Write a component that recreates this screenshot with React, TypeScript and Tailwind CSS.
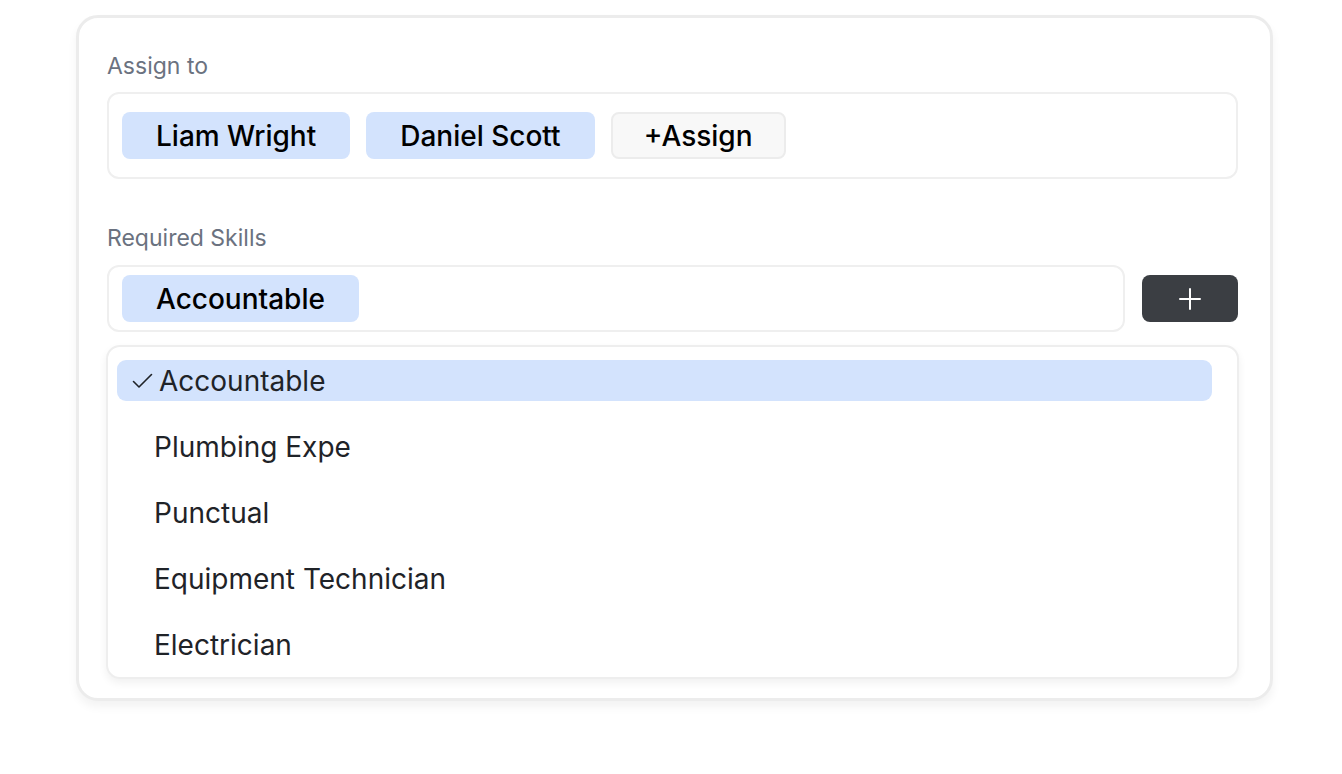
import { useState } from 'react';

const assignees = ['Liam Wright', 'Daniel Scott'];
const skills = ['Accountable', 'Plumbing Expe', 'Punctual', 'Equipment Technician', 'Electrician'];

function Chip({ label }: { label: string }) {
  return (
    <span className="flex h-[47px] items-center rounded-[8px] bg-[#d3e3fd] px-[34px] text-[28px] font-medium leading-none text-black">
      {label}
    </span>
  );
}

export default function App() {
  const [selected] = useState(['Accountable']);

  return (
    <div className="min-h-[774px] bg-white font-['Inter',sans-serif]">
      <div className="ml-[76px] pt-[15px]">
        <div className="w-[1197px] rounded-[22px] border-[3px] border-[#ececec] bg-white pb-[19px] pl-[28px] pr-[32px] pt-[34px] shadow-[0_6px_10px_rgba(0,0,0,0.05)]">
          {/* Assign to */}
          <p className="text-[23px] leading-[28px] text-[#6b7280]">Assign to</p>
          <div className="mt-[12px] flex h-[87px] items-center gap-[16px] rounded-[12px] border-2 border-[#efefef] px-[13px]">
            {assignees.map((name) => (
              <Chip key={name} label={name} />
            ))}
            <button className="flex h-[47px] items-center rounded-[8px] border-2 border-[#ececec] bg-[#f8f8f8] px-[31px] text-[28px] font-medium leading-none text-black">
              +Assign
            </button>
          </div>

          {/* Required Skills */}
          <p className="mt-[45px] text-[23px] leading-[28px] text-[#6b7280]">Required Skills</p>
          <div className="mt-[13px] flex items-center gap-[17px]">
            <div className="flex h-[67px] flex-1 items-center rounded-[12px] border-2 border-[#efefef] px-[13px]">
              {selected.map((s) => (
                <Chip key={s} label={s} />
              ))}
            </div>
            <button className="flex h-[47px] w-[96px] items-center justify-center rounded-[8px] bg-[#3b3e43]">
              <svg width="22" height="22" viewBox="0 0 22 22" fill="none" stroke="white" strokeWidth="2" strokeLinecap="round">
                <path d="M11 1v20M1 11h20" />
              </svg>
            </button>
          </div>

          {/* Dropdown */}
          <div className="-ml-px mt-[13px] w-[1133px] rounded-[14px] border-2 border-[#eeeeee] bg-white pb-[12px] pl-[9px] pr-[25px] pt-[13px] shadow-[0_4px_8px_rgba(0,0,0,0.06)]">
            <div className="flex flex-col gap-[25px]">
              {skills.map((s) => {
                const active = selected.includes(s);
                return (
                  <div
                    key={s}
                    className={`flex h-[41px] items-center rounded-[9px] text-[28px] leading-none text-[#1f2328] ${
                      active ? 'bg-[#d3e3fd] pl-[15px]' : 'pl-[37px]'
                    }`}
                  >
                    {active && (
                      <svg width="21" height="16" viewBox="0 0 21 16" fill="none" stroke="#1f2328" strokeWidth="1.6" strokeLinecap="round" strokeLinejoin="round" className="mr-[6px]">
                        <path d="M1.5 8.5l5.5 5.5L19.5 1.5" />
                      </svg>
                    )}
                    {s}
                  </div>
                );
              })}
            </div>
          </div>
        </div>
      </div>
    </div>
  );
}
